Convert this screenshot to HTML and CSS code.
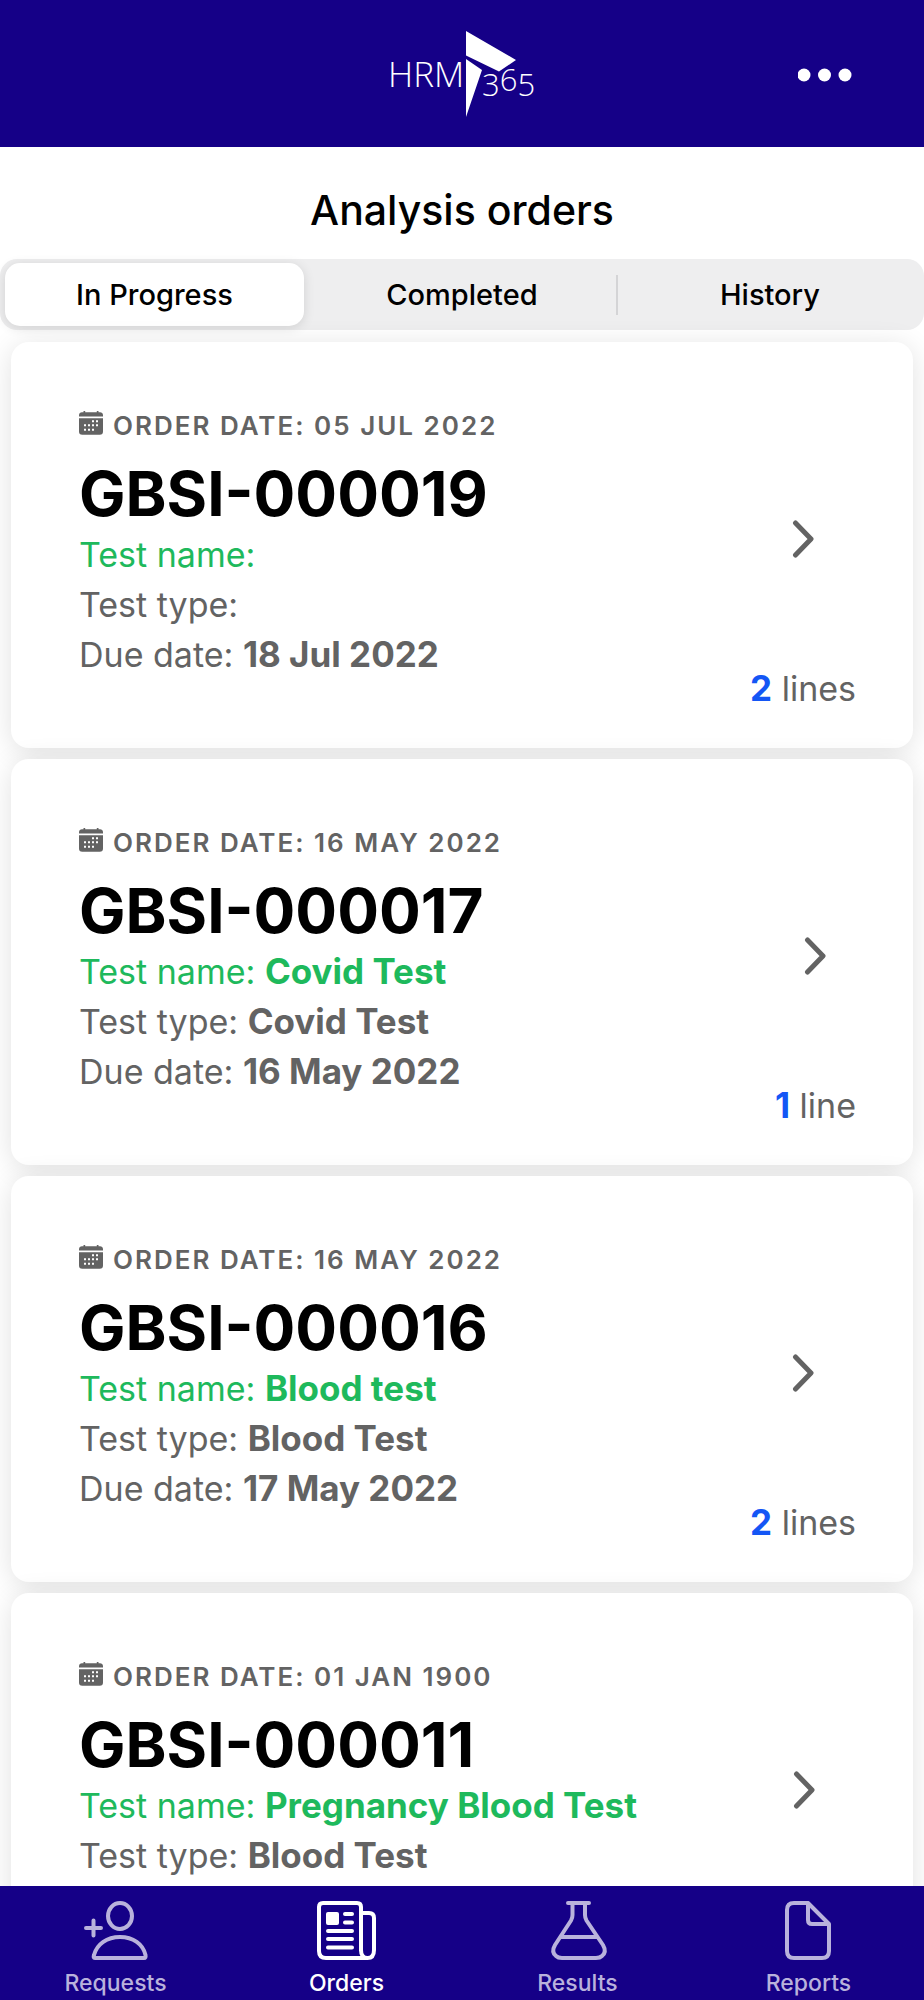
FILE: index.html
```html
<!DOCTYPE html>
<html lang="en">
<head>
<meta charset="utf-8">
<meta name="viewport" content="width=device-width, initial-scale=1">
<title>Analysis orders</title>
<link rel="stylesheet" href="styles.css">
</head>
<body>
<svg width="0" height="0" class="defs" aria-hidden="true">
  <symbol id="calendar" viewBox="0 0 24 24">
    <path fill="currentColor" d="M0 5.400V4Q.3 1.300 3 1.200H4.500V0H6.200V1.200H17.800V0H19.500V1.200H21Q23.700 1.300 24 4V5.400Z"/>
    <path fill="currentColor" fill-rule="evenodd" d="M0 7.200H24V20.500Q24 23.800 20.700 23.800H3.300Q0 23.800 0 20.500ZM13 9.300V11.300H15V9.300ZM17 9.300V11.300H19V9.300ZM5 13.300V15.300H7V13.300ZM9 13.300V15.300H11V13.300ZM13 13.300V15.300H15V13.300ZM17 13.300V15.300H19V13.300ZM5 17.700V19.700H7V17.700ZM9 17.700V19.700H11V17.700ZM13 17.700V19.700H15V17.700Z"/>
  </symbol>
  <symbol id="chevron" viewBox="0 0 22 38">
    <path d="M3.500 3 19 19 3.500 35" fill="none" stroke="currentColor" stroke-width="5" stroke-linecap="round" stroke-linejoin="round"/>
  </symbol>
</svg>

<header class="topbar">
  <svg class="logo" viewBox="-5 0 150 90" role="img" aria-label="HRM 365">
    <path fill="#fff" d="M74 0 124 29 107 40.500 74 24.500ZM74 28 90 39 74 86Z"/>
    <text class="logo-text" x="-4" y="56" font-size="35">HRM</text>
    <text class="logo-text" x="90" y="65" font-size="31">3<tspan dy="-5">6</tspan><tspan dy="5">5</tspan></text>
  </svg>
  <button class="more" type="button" aria-label="More">
    <svg viewBox="0 0 54 14"><g fill="#fff"><circle cx="6" cy="7" r="6.500"/><circle cx="26.500" cy="7" r="6.500"/><circle cx="47" cy="7" r="6.500"/></g></svg>
  </button>
</header>

<main class="content">
  <h1 class="title">Analysis orders</h1>
  <div class="segments" role="tablist">
    <button class="segment selected" type="button" role="tab" aria-selected="true">In Progress</button>
    <button class="segment" type="button" role="tab" aria-selected="false">Completed</button>
    <button class="segment divided" type="button" role="tab" aria-selected="false">History</button>
  </div>

  <div class="orders">
    <article class="card">
      <div class="details">
        <p class="date"><svg class="calendar"><use href="#calendar"/></svg>ORDER DATE: 05 JUL 2022</p>
        <h2 class="number">GBSI-000019</h2>
        <p class="line name">Test name:</p>
        <p class="line">Test type:</p>
        <p class="line">Due date: <b>18 Jul 2022</b></p>
      </div>
      <div class="side">
        <svg class="chevron"><use href="#chevron"/></svg>
        <p class="line"><b class="count">2</b> lines</p>
      </div>
    </article>
    <article class="card">
      <div class="details">
        <p class="date"><svg class="calendar"><use href="#calendar"/></svg>ORDER DATE: 16 MAY 2022</p>
        <h2 class="number">GBSI-000017</h2>
        <p class="line name">Test name: <b>Covid Test</b></p>
        <p class="line">Test type: <b>Covid Test</b></p>
        <p class="line">Due date: <b>16 May 2022</b></p>
      </div>
      <div class="side">
        <svg class="chevron"><use href="#chevron"/></svg>
        <p class="line"><b class="count">1</b> line</p>
      </div>
    </article>
    <article class="card">
      <div class="details">
        <p class="date"><svg class="calendar"><use href="#calendar"/></svg>ORDER DATE: 16 MAY 2022</p>
        <h2 class="number">GBSI-000016</h2>
        <p class="line name">Test name: <b>Blood test</b></p>
        <p class="line">Test type: <b>Blood Test</b></p>
        <p class="line">Due date: <b>17 May 2022</b></p>
      </div>
      <div class="side">
        <svg class="chevron"><use href="#chevron"/></svg>
        <p class="line"><b class="count">2</b> lines</p>
      </div>
    </article>
    <article class="card">
      <div class="details">
        <p class="date"><svg class="calendar"><use href="#calendar"/></svg>ORDER DATE: 01 JAN 1900</p>
        <h2 class="number">GBSI-000011</h2>
        <p class="line name">Test name: <b>Pregnancy Blood Test</b></p>
        <p class="line">Test type: <b>Blood Test</b></p>
      </div>
      <div class="side wide">
        <svg class="chevron"><use href="#chevron"/></svg>
      </div>
    </article>
  </div>
</main>

<nav class="tabbar">
  <a class="tab" href="#requests">
    <svg viewBox="0 0 64 60"><g class="stroke"><ellipse cx="36" cy="15" rx="12" ry="13"/><path d="M11 57Q9 57 10 54C13 43 23 36 36 36S59 43 61.500 54Q62 57 60 57ZM2 27H17M9.500 19.500V34.500"/></g></svg>
    Requests
  </a>
  <a class="tab active" href="#orders">
    <svg viewBox="0 0 64 60"><g class="stroke"><path d="M46 50V6Q46 2 42 2H8Q4 2 4 6V50Q4 57 11 57H51M46 12H54Q59 12 59 17V49Q59 57 52.500 57T46 49"/><path d="M30 13H37M30 21.500H37M13 30H37M13 38H37M13 46.500H37"/></g><rect x="11" y="11" width="13" height="13" rx="2" fill="currentColor"/></svg>
    Orders
  </a>
  <a class="tab" href="#results">
    <svg viewBox="0 0 64 60"><g class="stroke"><path d="M22 2H43M26.500 2V14Q26.500 17 25 19.500L9 44Q5 51 10 55Q12 57 16 57H50Q54 57 56 55Q61 51 57 44L40.500 19.500Q39 17 39 14V2M15 36H50"/></g></svg>
    Results
  </a>
  <a class="tab" href="#reports">
    <svg viewBox="0 0 64 60"><g class="stroke"><path d="M31 2H17Q10 2 10 9V50Q10 57 17 57H45Q52 57 52 50V23L31 2V19Q31 23 35 23H52"/></g></svg>
    Reports
  </a>
</nav>
</body>
</html>
```

FILE: styles.css
```css
* {
  box-sizing: border-box;
}

body {
  display: flex;
  flex-direction: column;
  height: 100vh;
  margin: 0;
  background: #fff;
  color: #000;
  font-family: Inter, "Liberation Sans", sans-serif;
}

h1, h2, p {
  margin: 0;
}

button {
  padding: 0;
  border: 0;
  background: none;
  color: inherit;
  font: inherit;
}

.defs {
  position: absolute;
}

.topbar {
  display: grid;
  grid-template-columns: 1fr auto 1fr;
  align-items: start;
  flex: none;
  height: 147px;
  padding: 31px 72px 0;
  background: #150087;
}

.logo {
  grid-column: 2;
  width: 150px;
  height: 90px;
  overflow: visible;
}

.logo-text {
  fill: #fff;
  font-family: "Open Sans", sans-serif;
  font-weight: 300;
}

.more {
  justify-self: end;
  margin-top: 37px;
}

.more svg {
  display: block;
  width: 54px;
  height: 14px;
}

.content {
  flex: 1;
  min-height: 0;
  overflow: hidden;
}

.title {
  padding: 37px 0 23px;
  font-size: 41px;
  font-weight: 500;
  line-height: 52px;
  text-align: center;
}

.segments {
  display: grid;
  grid-template-columns: repeat(3, 1fr);
  height: 71px;
  padding: 4px 0;
  border-radius: 17px;
  background: #eeeeef;
}

.segment {
  font-size: 29px;
  font-weight: 500;
}

.segment.selected {
  margin: 0 4px 0 5px;
  border-radius: 15px;
  background: #fff;
  box-shadow: 0 2px 12px rgba(0, 0, 0, 0.12);
}

.segment.divided {
  background: linear-gradient(#d4d4d6, #d4d4d6) left center / 2px 40px no-repeat;
}

.orders {
  display: grid;
  gap: 11px;
  padding: 12px 11px;
}

.card {
  display: flex;
  justify-content: space-between;
  min-height: 406px;
  padding: 66px 57px 34px 68px;
  border-radius: 18px;
  background: #fff;
  box-shadow: 0 4px 28px rgba(0, 0, 0, 0.12);
}

.date {
  display: flex;
  align-items: center;
  gap: 10px;
  color: #636363;
  font-size: 26px;
  font-weight: 600;
  letter-spacing: 2px;
  line-height: 36px;
}

.calendar {
  width: 24px;
  height: 24px;
  margin-bottom: 6px;
}

.number {
  margin: 14px 0 0;
  font-size: 62px;
  font-weight: 700;
  line-height: 72px;
}

.line {
  color: #636363;
  font-size: 34px;
  line-height: 50px;
}

.line b {
  font-size: 35px;
  line-height: 1;
}

.line.name {
  color: #1eb95c;
}

.line .count {
  color: #1456f5;
}

.side {
  display: flex;
  flex-direction: column;
  align-items: center;
  justify-content: space-between;
  padding-top: 112px;
}

.side.wide {
  min-width: 105px;
}

.chevron {
  width: 22px;
  height: 38px;
  color: #636363;
}

.tabbar {
  display: grid;
  grid-template-columns: repeat(4, 1fr);
  flex: none;
  height: 114px;
  padding-top: 15px;
  background: #150087;
}

.tab {
  display: flex;
  flex-direction: column;
  align-items: center;
  gap: 7px;
  color: #b9b2dc;
  font-size: 23px;
  font-weight: 500;
  line-height: 30px;
  text-decoration: none;
}

.tab.active {
  color: #fff;
}

.tab svg {
  width: 64px;
  height: 60px;
}

.stroke {
  fill: none;
  stroke: currentColor;
  stroke-width: 4;
  stroke-linecap: round;
  stroke-linejoin: round;
}
```
